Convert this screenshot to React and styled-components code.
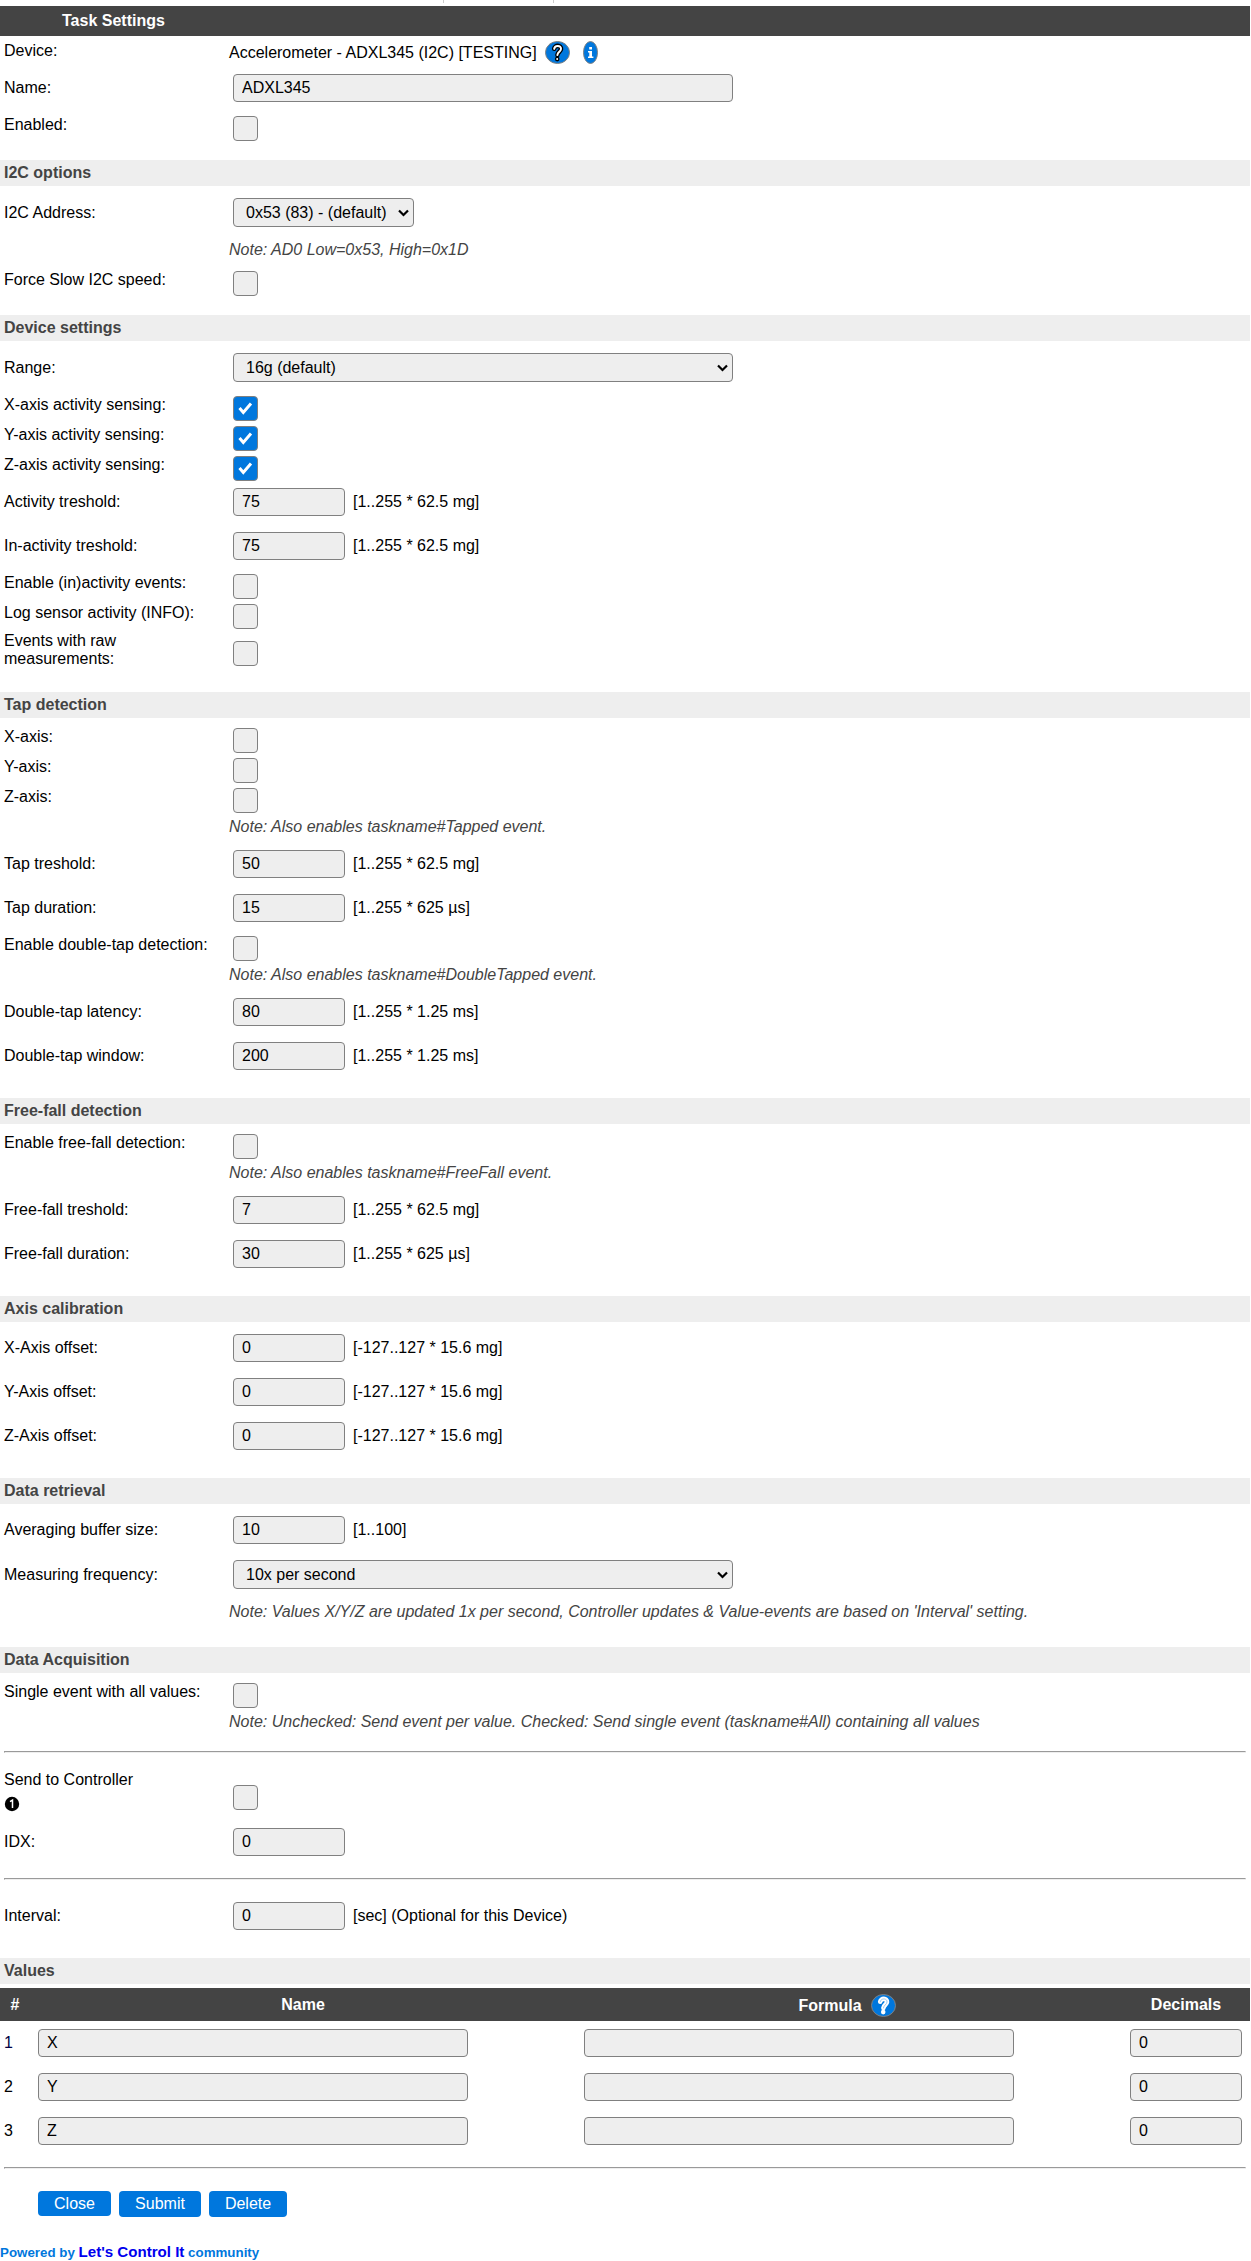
import React from "react";
import styled, { createGlobalStyle, css } from "styled-components";

const Global = createGlobalStyle`
  * { box-sizing: border-box; }
  html, body { margin: 0; background: #fff; }
  body { font: 16px/18px "Liberation Sans", Arial, sans-serif; color: #000; }
`;
const Page = styled.div`
  width: 1250px;
  height: 2261px;
  display: flex;
  flex-direction: column;
  overflow: hidden;
`;
const TabStrip = styled.div`
  height: 6px;
  flex: none;
  display: flex;
  padding-left: 443px;
`;
const TabEdge = styled.div`
  width: 111px;
  height: 3px;
  border: solid #ccc;
  border-width: 0 1px;
`;
const TitleBar = styled.div`
  height: 30px;
  flex: none;
  background: #444;
  color: #fff;
  font-weight: bold;
  padding: 6px 0 0 62px;
`;
const Section = styled.div`
  height: 26px;
  flex: none;
  margin: 20px 0 4px;
  padding: 4px;
  background: #eee;
  color: #444;
  font-weight: bold;
`;
const Row = styled.div`
  display: grid;
  grid-template-columns: 225px 1fr;
  flex: none;
  height: ${(p) => p.$h}px;
  padding-left: 4px;
`;
const Label = styled.div`
  padding-top: ${(p) => p.$top}px;
  width: 210px;
`;
const Cell = styled.div`
  display: flex;
  align-items: flex-start;
  padding: ${(p) => p.$top}px 0 0 ${(p) => p.$left ?? 4}px;
`;
const field = css`
  background: #eee;
  border: 1px solid gray;
  border-radius: 4px;
  color: #000;
  font: inherit;
  margin: 0;
  outline: none;
`;
const Input = styled.input`
  ${field}
  display: block;
  width: ${(p) => p.$w}px;
  height: 28px;
  padding: 0 8px;
`;
const SelectBox = styled.div`
  ${field}
  width: ${(p) => p.$w}px;
  height: 29px;
  padding: 0 4px 0 12px;
  display: flex;
  align-items: center;
  justify-content: space-between;
`;
const Check = styled.div`
  ${field}
  width: 25px;
  height: 25px;
  display: flex;
  align-items: center;
  justify-content: center;
  ${(p) => p.$on && "background: #07d;"}
`;
const Unit = styled.span`
  padding: 5px 0 0 8px;
`;
const Note = styled.div`
  flex: none;
  height: 30px;
  padding: 6px 0 0 229px;
  color: #444;
  font-style: italic;
`;
const RuleRow = styled.div`
  flex: none;
  height: 30px;
  padding: 14px 4px 0;
`;
const Rule = styled.div`
  height: 2px;
  border: 1px solid #9a9a9a;
  border-bottom-color: #eee;
  border-right-color: #eee;
`;
const Icon = styled.svg`
  display: block;
  flex: none;
  margin-left: ${(p) => p.$ml}px;
`;
const Badge = styled.svg`
  display: block;
  margin-top: 7px;
`;
const ValueGrid = styled.div`
  display: grid;
  grid-template-columns: 38px 546px 546px 120px;
  flex: none;
`;
const HeadGrid = styled.div`
  display: grid;
  grid-template-columns: 30px 546px 546px 128px;
  flex: none;
  height: 33px;
  background: #444;
  color: #fff;
  font-weight: bold;
`;
const HeadCell = styled.div`
  display: flex;
  justify-content: center;
  padding: ${(p) => p.$top ?? 8}px ${(p) => p.$right ?? 0}px 0 0;
`;
const HeadText = styled.span`
  padding-top: ${(p) => p.$top ?? 0}px;
`;
const ValueCell = styled.div`
  height: 44px;
  padding-top: 8px;
`;
const Index = styled.div`
  color: ${(p) => (p.$linked ? "#004" : "#000")};
  padding: 13px 0 0 4px;
`;
const Buttons = styled.div`
  display: flex;
  flex: none;
  gap: 8px;
  padding: 8px 0 0 38px;
  height: 60px;
`;
const Button = styled.button`
  width: ${(p) => p.$w}px;
  height: ${(p) => p.$h}px;
  padding: 0;
  border: 0;
  border-radius: 4px;
  background: #07d;
  color: #fff;
  font: inherit;
`;
const Footer = styled.footer`
  color: #07d;
  font-size: 13.33px;
  font-weight: bold;
  white-space: nowrap;
`;
const FooterLink = styled.a`
  color: #00e;
  font-size: 15.1px;
`;

const Chevron = () => (
  <svg width="11" height="8" viewBox="0 0 11 8">
    <path d="M1 1.5 L5.5 6 L10 1.5" fill="none" stroke="#000" strokeWidth="2.2" />
  </svg>
);
const Tick = () => (
  <svg width="17" height="15" viewBox="0 0 17 15">
    <path d="M2.5 7 L6.3 11.5 L14 2.5" fill="none" stroke="#fff" strokeWidth="3" />
  </svg>
);
const Q = "M9.2 7.8 C9.6 3.8 16.4 4 16 8 C15.7 10.8 12.8 10.8 12.4 14";
const Help = ({ ml, light }) => (
  <Icon $ml={ml} width="25" height="23" viewBox="0 0 25 23">
    <ellipse cx="12.5" cy="11.5" rx="12" ry="11" fill="#07d" stroke="gray" />
    <g fill="none" strokeLinecap="round">
      <path d={Q} stroke={light ? "#fff" : "#000"} strokeWidth="4.6" />
      <path d="M12.2 18 V18.1" stroke={light ? "#fff" : "#000"} strokeWidth="4.6" />
      <path d={Q} stroke={light ? "#9ccbf2" : "#fff"} strokeWidth={light ? 1 : 2} />
      <path d="M12.2 18 V18.1" stroke="#fff" strokeWidth="2" />
    </g>
  </Icon>
);
const Info = () => (
  <Icon $ml={13} width="15" height="23" viewBox="0 0 15 23">
    <ellipse cx="7.5" cy="11.5" rx="7" ry="11" fill="#07d" stroke="gray" />
    <path d="M6.2 6h2.8v2.5H6.2zM5 10h4v5.4h1.4V17H5v-1.6h1.3v-3.8H5z" fill="#fff" />
  </Icon>
);

const CheckRow = ({ label, on }) => (
  <Row $h={30}>
    <Label $top={6}>{label}</Label>
    <Cell $top={6}><Check $on={on}>{on && <Tick />}</Check></Cell>
  </Row>
);
const InputRow = ({ label, value, unit, w = 112 }) => (
  <Row $h={44}>
    <Label $top={13}>{label}</Label>
    <Cell $top={8}>
      <Input $w={w} defaultValue={value} />
      {unit && <Unit>{unit}</Unit>}
    </Cell>
  </Row>
);
const SelectRow = ({ label, value, w = 500 }) => (
  <Row $h={45}>
    <Label $top={14}>{label}</Label>
    <Cell $top={8}><SelectBox $w={w}>{value}<Chevron /></SelectBox></Cell>
  </Row>
);

export default function App() {
  return (
    <Page>
      <Global />
      <TabStrip><TabEdge /></TabStrip>
      <TitleBar>Task Settings</TitleBar>
      <Row $h={30}>
        <Label $top={6}>Device:</Label>
        <Cell $top={5} $left={0}>
          <HeadText $top={3}>Accelerometer - ADXL345 (I2C) [TESTING]</HeadText>
          <Help ml={8} />
          <Info />
        </Cell>
      </Row>
      <InputRow label="Name:" value="ADXL345" w={500} />
      <CheckRow label="Enabled:" />

      <Section>I2C options</Section>
      <SelectRow label="I2C Address:" value="0x53 (83) - (default)" w={181} />
      <Note>Note: AD0 Low=0x53, High=0x1D</Note>
      <CheckRow label="Force Slow I2C speed:" />

      <Section>Device settings</Section>
      <SelectRow label="Range:" value="16g (default)" />
      <CheckRow label="X-axis activity sensing:" on />
      <CheckRow label="Y-axis activity sensing:" on />
      <CheckRow label="Z-axis activity sensing:" on />
      <InputRow label="Activity treshold:" value="75" unit="[1..255 * 62.5 mg]" />
      <InputRow label="In-activity treshold:" value="75" unit="[1..255 * 62.5 mg]" />
      <CheckRow label="Enable (in)activity events:" />
      <CheckRow label="Log sensor activity (INFO):" />
      <Row $h={44}>
        <Label $top={4}>Events with raw<br />measurements:</Label>
        <Cell $top={13}><Check /></Cell>
      </Row>

      <Section>Tap detection</Section>
      <CheckRow label="X-axis:" />
      <CheckRow label="Y-axis:" />
      <CheckRow label="Z-axis:" />
      <Note>Note: Also enables taskname#Tapped event.</Note>
      <InputRow label="Tap treshold:" value="50" unit="[1..255 * 62.5 mg]" />
      <InputRow label="Tap duration:" value="15" unit="[1..255 * 625 µs]" />
      <CheckRow label="Enable double-tap detection:" />
      <Note>Note: Also enables taskname#DoubleTapped event.</Note>
      <InputRow label="Double-tap latency:" value="80" unit="[1..255 * 1.25 ms]" />
      <InputRow label="Double-tap window:" value="200" unit="[1..255 * 1.25 ms]" />

      <Section>Free-fall detection</Section>
      <CheckRow label="Enable free-fall detection:" />
      <Note>Note: Also enables taskname#FreeFall event.</Note>
      <InputRow label="Free-fall treshold:" value="7" unit="[1..255 * 62.5 mg]" />
      <InputRow label="Free-fall duration:" value="30" unit="[1..255 * 625 µs]" />

      <Section>Axis calibration</Section>
      <InputRow label="X-Axis offset:" value="0" unit="[-127..127 * 15.6 mg]" />
      <InputRow label="Y-Axis offset:" value="0" unit="[-127..127 * 15.6 mg]" />
      <InputRow label="Z-Axis offset:" value="0" unit="[-127..127 * 15.6 mg]" />

      <Section>Data retrieval</Section>
      <InputRow label="Averaging buffer size:" value="10" unit="[1..100]" />
      <SelectRow label="Measuring frequency:" value="10x per second" />
      <Note>Note: Values X/Y/Z are updated 1x per second, Controller updates &amp; Value-events are based on 'Interval' setting.</Note>

      <Section>Data Acquisition</Section>
      <CheckRow label="Single event with all values:" />
      <Note>Note: Unchecked: Send event per value. Checked: Send single event (taskname#All) containing all values</Note>
      <RuleRow><Rule /></RuleRow>
      <Row $h={53}>
        <Label $top={4}>
          Send to Controller
          <Badge width="16" height="16" viewBox="0 0 16 16">
            <circle cx="8" cy="8" r="7.2" />
            <path d="M6 5.6 L8.5 4 V12" fill="none" stroke="#fff" strokeWidth="1.5" />
          </Badge>
        </Label>
        <Cell $top={18}><Check /></Cell>
      </Row>
      <InputRow label="IDX:" value="0" />
      <RuleRow><Rule /></RuleRow>
      <InputRow label="Interval:" value="0" unit="[sec] (Optional for this Device)" />

      <Section>Values</Section>
      <HeadGrid>
        <HeadCell>#</HeadCell>
        <HeadCell>Name</HeadCell>
        <HeadCell $top={6} $right={4}><HeadText $top={3}>Formula</HeadText><Help ml={9} light /></HeadCell>
        <HeadCell>Decimals</HeadCell>
      </HeadGrid>
      {["X", "Y", "Z"].map((name, i) => (
        <ValueGrid key={name}>
          <Index $linked={i === 0}>{i + 1}</Index>
          <ValueCell><Input $w={430} defaultValue={name} /></ValueCell>
          <ValueCell><Input $w={430} defaultValue="" /></ValueCell>
          <ValueCell><Input $w={112} defaultValue="0" /></ValueCell>
        </ValueGrid>
      ))}
      <RuleRow><Rule /></RuleRow>
      <Buttons>
        <Button $w={73} $h={25}>Close</Button>
        <Button $w={82} $h={26}>Submit</Button>
        <Button $w={78} $h={26}>Delete</Button>
      </Buttons>
      <Footer>Powered by <FooterLink>Let's Control It</FooterLink> community</Footer>
    </Page>
  );
}
